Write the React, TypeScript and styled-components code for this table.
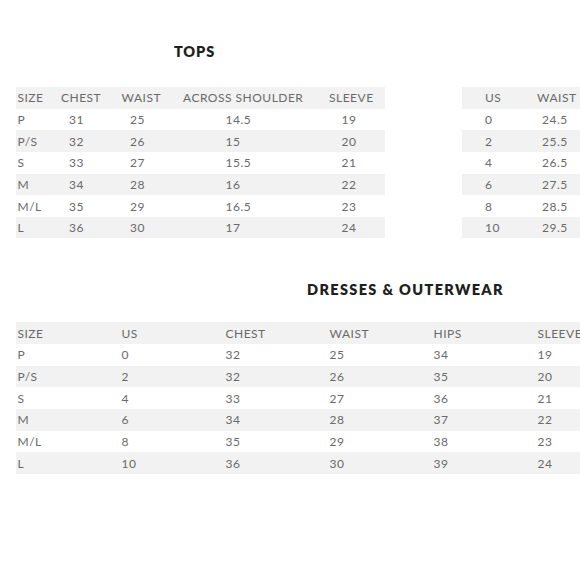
import React from "react"
import styled, { createGlobalStyle } from "styled-components";

type Column = {
    label: string,
    width: string,
    indent: number,
}

const GlobalStyle = createGlobalStyle`
    html, body {
        margin: 0;
        padding: 0;
        background: #ffffff;
        overflow: hidden;
    }
    body {
        font-family: Lato, "Open Sans", sans-serif;
        color: #666666;
    }
`

const topsColumns: Column[] = [
    { label: "SIZE", width: "43.5px", indent: 0 },
    { label: "CHEST", width: "60.5px", indent: 8 },
    { label: "WAIST", width: "61.5px", indent: 8.5 },
    { label: "ACROSS SHOULDER", width: "146px", indent: 42.5 },
    { label: "SLEEVE", width: "1fr", indent: 12.5 },
]

const topsRows = [
    ["P", "31", "25", "14.5", "19"],
    ["P/S", "32", "26", "15", "20"],
    ["S", "33", "27", "15.5", "21"],
    ["M", "34", "28", "16", "22"],
    ["M/L", "35", "29", "16.5", "23"],
    ["L", "36", "30", "17", "24"],
]

const pantsColumns: Column[] = [
    { label: "US", width: "52px", indent: 0 },
    { label: "WAIST", width: "1fr", indent: 5 },
]

const pantsRows = [
    ["0", "24.5"],
    ["2", "25.5"],
    ["4", "26.5"],
    ["6", "27.5"],
    ["8", "28.5"],
    ["10", "29.5"],
]

const dressColumns: Column[] = ["SIZE", "US", "CHEST", "WAIST", "HIPS", "SLEEVE"]
    .map(label => ({ label, width: "104px", indent: 0 }));

const dressRows = [
    ["P", "0", "32", "25", "34", "19"],
    ["P/S", "2", "32", "26", "35", "20"],
    ["S", "4", "33", "27", "36", "21"],
    ["M", "6", "34", "28", "37", "22"],
    ["M/L", "8", "35", "29", "38", "23"],
    ["L", "10", "36", "30", "39", "24"],
]

const SizeTable: React.FC<{ columns: Column[], rows: string[][], lead: number }> = ({ columns, rows, lead }) => {
    const template = columns.map(c => c.width).join(" ");
    return (
        <Table>
            <Row $template={template} $lead={lead}>
                {columns.map(c => <HeadCell key={c.label}>{c.label}</HeadCell>)}
            </Row>
            {rows.map(row => (
                <Row key={row[0]} $template={template} $lead={lead}>
                    {row.map((value, i) => (
                        <Cell key={i} $indent={columns[i].indent}>{value}</Cell>
                    ))}
                </Row>
            ))}
        </Table>
    )
}

const App: React.FC = () => {
    return (
        <>
            <GlobalStyle />
            <Page>
                <TopSection>
                    <TopsBlock>
                        <Title>TOPS</Title>
                        <SizeTable columns={topsColumns} rows={topsRows} lead={1.5} />
                    </TopsBlock>
                    <PantsBlock>
                        <SizeTable columns={pantsColumns} rows={pantsRows} lead={23} />
                    </PantsBlock>
                </TopSection>
                <DressTitle>DRESSES &amp; OUTERWEAR</DressTitle>
                <DressBlock>
                    <SizeTable columns={dressColumns} rows={dressRows} lead={1.5} />
                </DressBlock>
            </Page>
        </>
    )
}

const Page = styled.div`
    width: 580px;
    height: 580px;
    overflow: hidden;
    display: flex;
    flex-direction: column;
`

const TopSection = styled.div`
    display: flex;
    align-items: flex-end;
    padding-top: 43px;
`

const TopsBlock = styled.div`
    width: 369px;
    margin-left: 16px;
    flex-shrink: 0;
`

const PantsBlock = styled.div`
    margin-left: 77px;
    width: 160px;
    flex-shrink: 0;
`

const DressBlock = styled.div`
    margin-left: 16px;
    width: 624px;
    flex-shrink: 0;
`

const Title = styled.div`
    font-size: 14.5px;
    line-height: 18px;
    font-weight: 800;
    letter-spacing: 0.9px;
    color: #1f1f1f;
    text-align: center;
    padding-right: 12px;
    margin-bottom: 26px;
`

const DressTitle = styled(Title)`
    text-align: left;
    padding-right: 0;
    letter-spacing: 1.35px;
    margin: 43px 0 23px 307px;
    white-space: nowrap;
`

const Table = styled.div`
    display: flex;
    flex-direction: column;
`

const Row = styled.div<{ $template: string, $lead: number }>`
    display: grid;
    grid-template-columns: ${p => p.$template};
    align-items: center;
    height: 21.65px;
    padding-left: ${p => p.$lead}px;
    font-size: 12px;
    letter-spacing: 0.5px;
    white-space: nowrap;

    &:nth-child(odd) {
        background: #f2f2f2;
    }
`

const HeadCell = styled.div`
    color: #6a6a6a;
`

const Cell = styled.div<{ $indent: number }>`
    padding-left: ${p => p.$indent}px;
    color: #6a6a6a;
`

export default App;
